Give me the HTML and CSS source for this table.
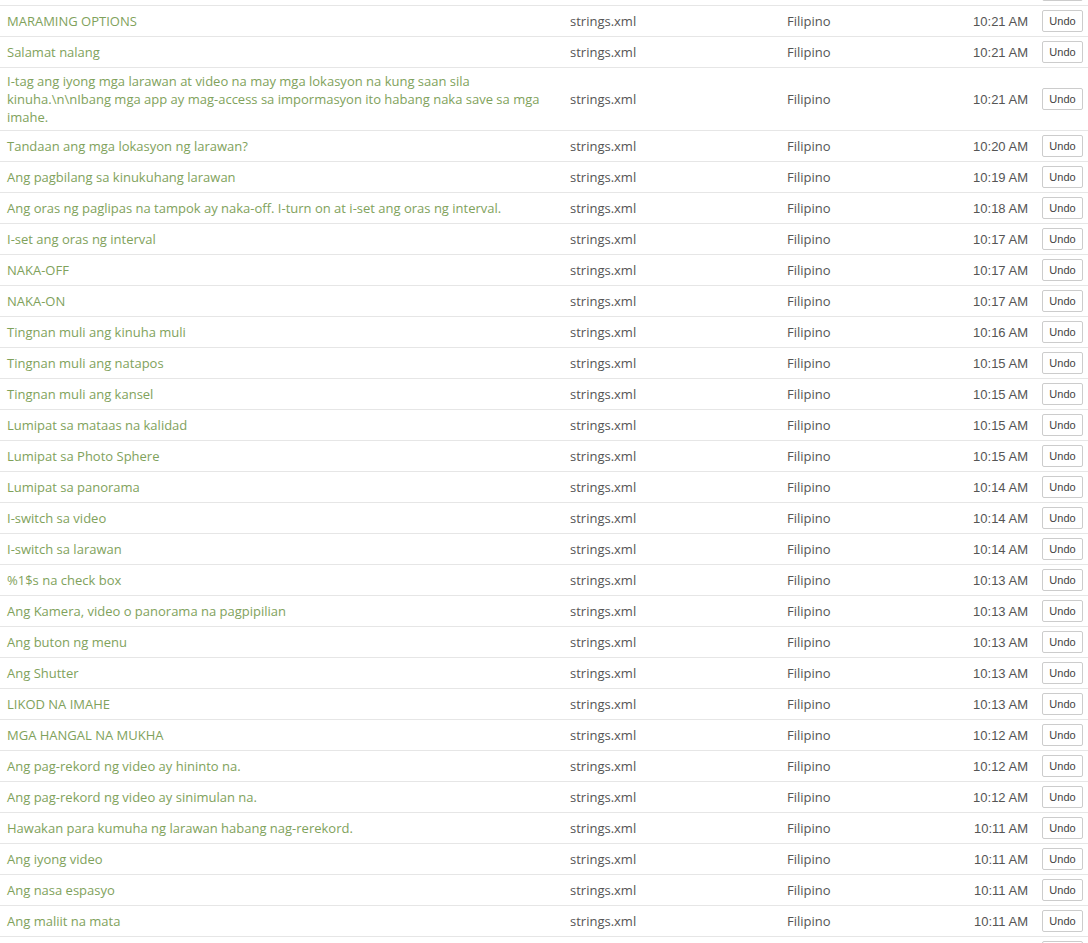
FILE: index.html
```html
<!DOCTYPE html>
<html lang="en">
  <head>
    <meta charset="UTF-8" />
    <meta name="viewport" content="width=device-width, initial-scale=1.0" />
    <title>History</title>
    <link rel="stylesheet" href="styles.css">
  </head>
  <body>
    <div class="history">
      <table class="changes">
        <colgroup>
          <col class="col-text" />
          <col class="col-file" />
          <col class="col-lang" />
          <col class="col-time" />
          <col class="col-action" />
        </colgroup>
        <tbody id="rows">
          <!-- tail of the row above the visible area -->
          <tr class="tail">
            <td></td>
            <td></td>
            <td></td>
            <td></td>
            <td class="action"><button type="button" aria-label="Undo"></button></td>
          </tr>
        </tbody>
      </table>
    </div>

    <script>
      const changes = [
        ["MARAMING OPTIONS", "10:21 AM"],
        ["Salamat nalang", "10:21 AM"],
        ["I-tag ang iyong mga larawan at video na may mga lokasyon na kung saan sila kinuha.\\n\\nIbang mga app ay mag-access sa impormasyon ito habang naka save sa mga imahe.", "10:21 AM"],
        ["Tandaan ang mga lokasyon ng larawan?", "10:20 AM"],
        ["Ang pagbilang sa kinukuhang larawan", "10:19 AM"],
        ["Ang oras ng paglipas na tampok ay naka-off. I-turn on at i-set ang oras ng interval.", "10:18 AM"],
        ["I-set ang oras ng interval", "10:17 AM"],
        ["NAKA-OFF", "10:17 AM"],
        ["NAKA-ON", "10:17 AM"],
        ["Tingnan muli ang kinuha muli", "10:16 AM"],
        ["Tingnan muli ang natapos", "10:15 AM"],
        ["Tingnan muli ang kansel", "10:15 AM"],
        ["Lumipat sa mataas na kalidad", "10:15 AM"],
        ["Lumipat sa Photo Sphere", "10:15 AM"],
        ["Lumipat sa panorama", "10:14 AM"],
        ["I-switch sa video", "10:14 AM"],
        ["I-switch sa larawan", "10:14 AM"],
        ["%1$s na check box", "10:13 AM"],
        ["Ang Kamera, video o panorama na pagpipilian", "10:13 AM"],
        ["Ang buton ng menu", "10:13 AM"],
        ["Ang Shutter", "10:13 AM"],
        ["LIKOD NA IMAHE", "10:13 AM"],
        ["MGA HANGAL NA MUKHA", "10:12 AM"],
        ["Ang pag-rekord ng video ay hininto na.", "10:12 AM"],
        ["Ang pag-rekord ng video ay sinimulan na.", "10:12 AM"],
        ["Hawakan para kumuha ng larawan habang nag-rerekord.", "10:11 AM"],
        ["Ang iyong video", "10:11 AM"],
        ["Ang nasa espasyo", "10:11 AM"],
        ["Ang maliit na mata", "10:11 AM"],
      ];

      const tbody = document.getElementById("rows");
      changes.forEach(([text, time]) => {
        const tr = document.createElement("tr");
        tr.innerHTML = `<td class="source"></td>
          <td class="file">strings.xml</td>
          <td class="lang">Filipino</td>
          <td class="time">${time}</td>
          <td class="action"><button type="button">Undo</button></td>`;
        tr.querySelector(".source").textContent = text;
        tbody.appendChild(tr);
      });

      // start of the next row, cut by the bottom of the window
      const next = document.createElement("tr");
      next.className = "tail";
      next.innerHTML = `<td></td><td></td><td></td><td></td>
        <td class="action"><button type="button" aria-label="Undo"></button></td>`;
      tbody.appendChild(next);
    </script>
  </body>
</html>
```

FILE: styles.css
```css
body {
  margin: 0;
  background: #fff;
  font-family: "Open Sans", "Liberation Sans", sans-serif;
  font-size: 13px;
  color: #555;
  overflow: hidden;
}

.history {
  margin-top: -26px;
}

.changes {
  width: 1088px;
  table-layout: fixed;
  border-collapse: collapse;
}

.col-text {
  width: 563px;
}

.col-file {
  width: 217px;
}

.col-lang {
  width: 160px;
}

.col-time {
  width: 95px;
}

.col-action {
  width: 53px;
}

.changes td {
  border-top: 1px solid #e6e6e6;
  padding: 4px 7px;
  line-height: 18px;
  vertical-align: middle;
}

.source {
  color: #7fa25c;
}

.changes td.time {
  padding-top: 5px;
  padding-bottom: 3px;
  text-align: right;
  font-family: "Liberation Sans", Arial, sans-serif;
}

.changes td.action {
  padding-right: 0;
}

button {
  display: block;
  width: 41px;
  height: 22px;
  padding: 0;
  background: #fff;
  border: 1px solid #ccc;
  border-radius: 2px;
  font-family: "Liberation Sans", Arial, sans-serif;
  font-size: 11px;
  color: #444;
}
```
